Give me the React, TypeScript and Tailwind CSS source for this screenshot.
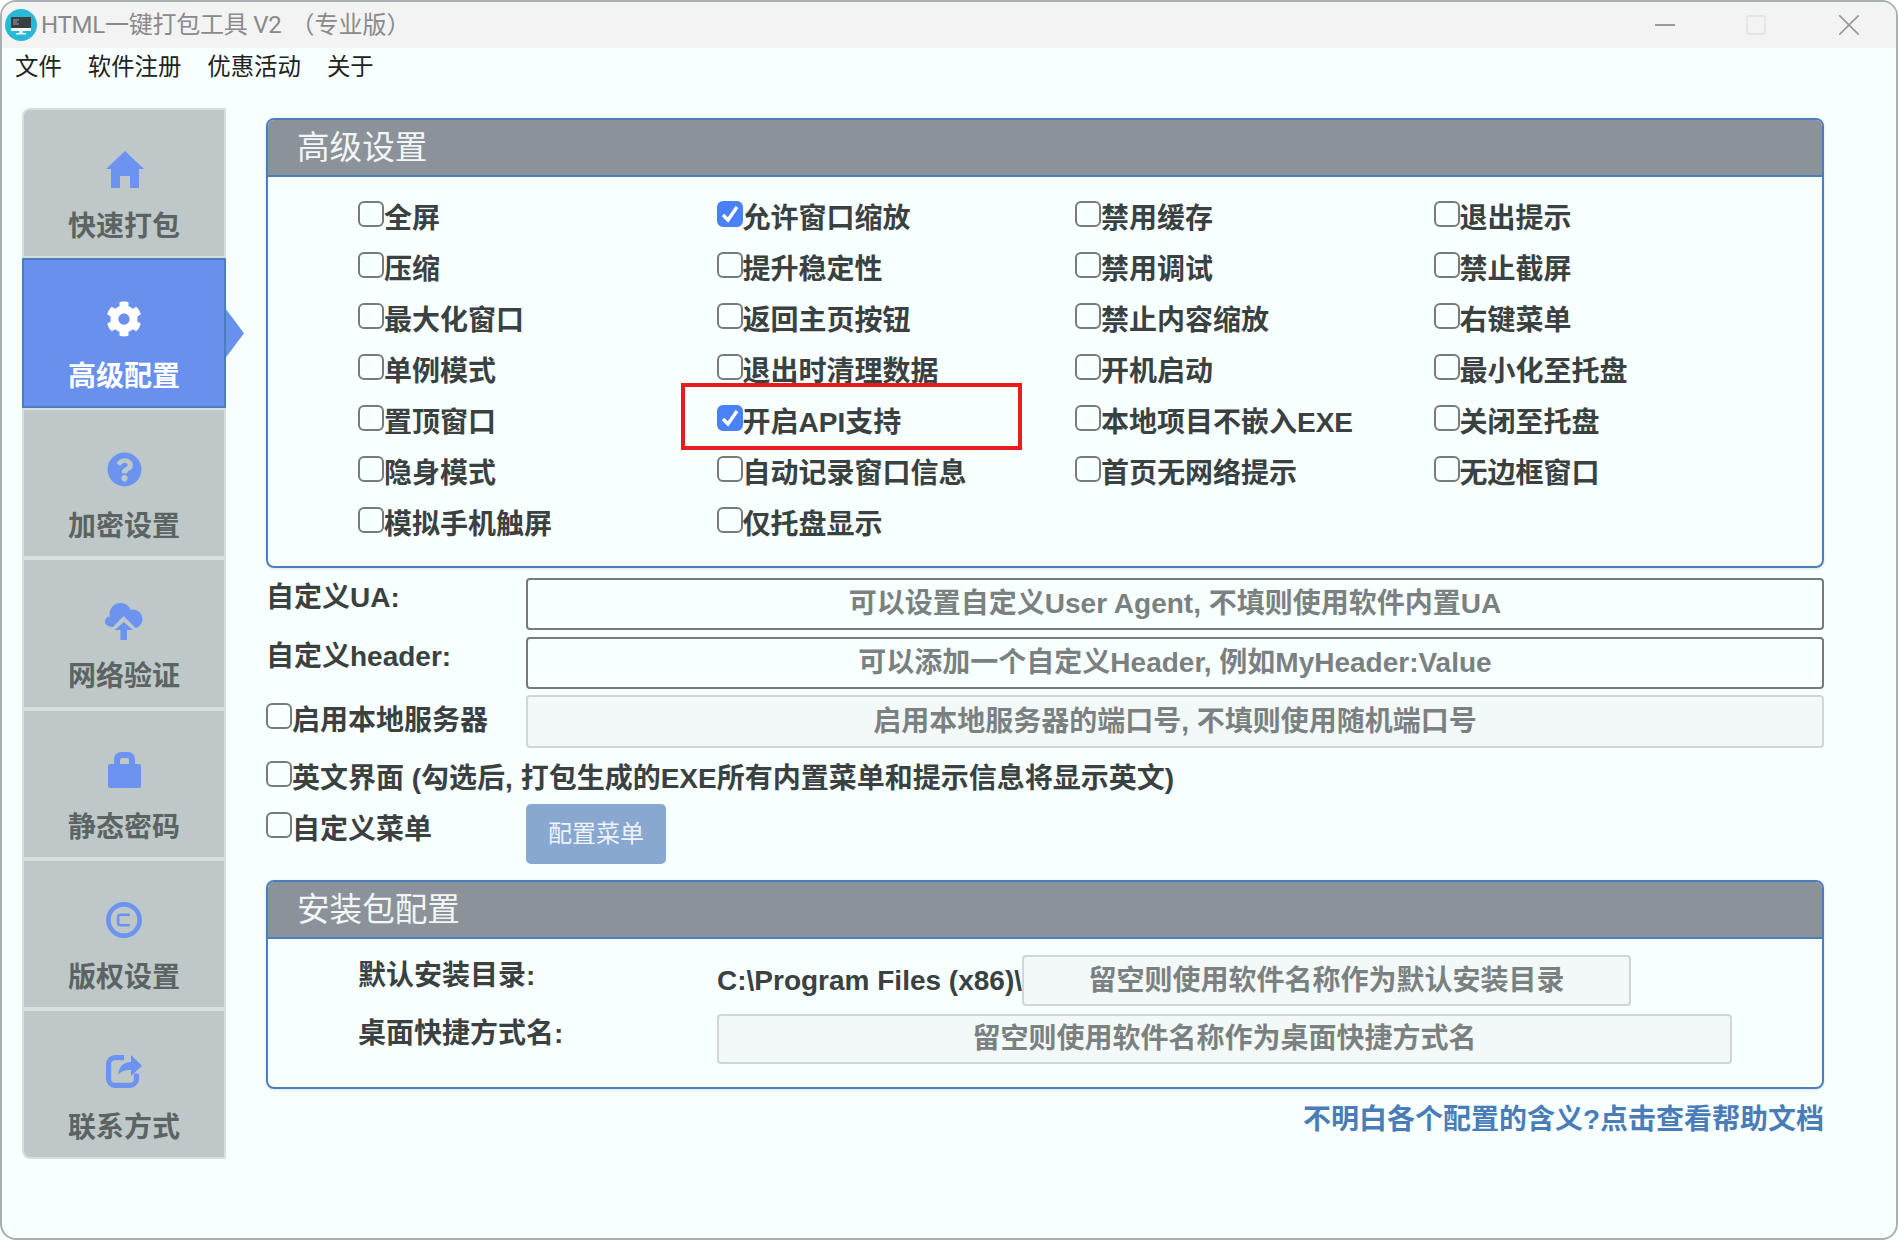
import React from 'react';
import { FaCog, FaQuestionCircle } from 'react-icons/fa';

const HomeIcon = () => (
  <svg className="ml-[2px]" width="38" height="37" viewBox="0 0 38 37" fill="currentColor">
    <path d="M19 0 L38 18 L33 18 L33 37 L24 37 L24 25 L14 25 L14 37 L5 37 L5 18 L0 18 Z" />
  </svg>
);

const CloudIcon = () => (
  <svg className="mt-[5px]" width="38" height="37" viewBox="0 0 38 37" fill="currentColor">
    <circle cx="5" cy="18.5" r="5" />
    <circle cx="15.5" cy="11" r="11" />
    <circle cx="28" cy="16" r="9.5" />
    <rect x="5" y="14" width="24" height="10" />
    <path d="M3 29 L18.7 13 L34.5 29 L34.5 37 L3 37 Z" fill="#bfc8c9" />
    <path d="M18.7 19 L28 27 L22 27 L22 37 L15.4 37 L15.4 27 L9.5 27 Z" />
  </svg>
);

const LockIcon = () => (
  <svg width="33" height="36" viewBox="0 0 33 36" fill="currentColor">
    <path
      fillRule="evenodd"
      d="M6 12 V7 A7 7 0 0 1 13 0 H20 A7 7 0 0 1 27 7 V12 H31 A2 2 0 0 1 33 14 V34 A2 2 0 0 1 31 36 H2 A2 2 0 0 1 0 34 V14 A2 2 0 0 1 2 12 Z M12 12 H21 V8 A2 2 0 0 0 19 6 H14 A2 2 0 0 0 12 8 Z"
    />
  </svg>
);

const CopyrightIcon = () => (
  <svg width="36" height="36" viewBox="0 0 36 36" fill="none" stroke="currentColor">
    <circle cx="18" cy="18" r="15.6" strokeWidth="4.6" />
    <path d="M24 12.8 H14.5 A2.4 2.4 0 0 0 12.1 15.2 V20.8 A2.4 2.4 0 0 0 14.5 23.2 H24" strokeWidth="2.6" />
  </svg>
);

const ShareIcon = () => (
  <svg className="mt-[3px]" width="36" height="33" viewBox="0 0 36 33" fill="none">
    <path
      d="M18 2.6 H9 A6.4 6.4 0 0 0 2.6 9 V24 A6.4 6.4 0 0 0 9 30.4 H24 A6.4 6.4 0 0 0 30.4 24 V18.5"
      stroke="currentColor"
      strokeWidth="5.2"
    />
    <path d="M25 0 L36 10.7 L25 21 V15 C19 15 15 16 12 20 C13 12 17 7 25 7 Z" fill="currentColor" />
  </svg>
);

const AppLogo = () => (
  <svg width="32" height="32" viewBox="0 0 32 32">
    <circle cx="16" cy="16" r="16" fill="#2ab8d8" />
    <rect x="6" y="8" width="20" height="14" fill="#f4f8f8" />
    <rect x="6" y="8" width="20" height="11" fill="#3a3f44" />
    <path d="M8 11 h6 M8 13 h4 M8 15 h6" stroke="#9aa2a8" strokeWidth="1" />
    <rect x="14" y="22" width="4" height="2" fill="#dfe8ea" />
    <rect x="11" y="24" width="10" height="1.5" fill="#f4f8f8" />
  </svg>
);

const navItems = [
  { label: '快速打包', icon: <HomeIcon /> },
  { label: '高级配置', icon: <FaCog size={36} />, active: true },
  { label: '加密设置', icon: <FaQuestionCircle size={35} /> },
  { label: '网络验证', icon: <CloudIcon /> },
  { label: '静态密码', icon: <LockIcon /> },
  { label: '版权设置', icon: <CopyrightIcon /> },
  { label: '联系方式', icon: <ShareIcon /> },
];

const options = [
  ['全屏', '允许窗口缩放', '禁用缓存', '退出提示'],
  ['压缩', '提升稳定性', '禁用调试', '禁止截屏'],
  ['最大化窗口', '返回主页按钮', '禁止内容缩放', '右键菜单'],
  ['单例模式', '退出时清理数据', '开机启动', '最小化至托盘'],
  ['置顶窗口', '开启API支持', '本地项目不嵌入EXE', '关闭至托盘'],
  ['隐身模式', '自动记录窗口信息', '首页无网络提示', '无边框窗口'],
  ['模拟手机触屏', '仅托盘显示', '', ''],
];

const checked = ['允许窗口缩放', '开启API支持'];

const Check = ({ on = false, top = 'mt-[10px]' }: { on?: boolean; top?: string }) => (
  <span className={`relative w-[26px] h-[26px] shrink-0 ${top}`}>
    <input
      type="checkbox"
      defaultChecked={on}
      className="block appearance-none w-[26px] h-[26px] m-0 border-2 border-[#767b7b] rounded-[6px] checked:bg-[#4a80f8] checked:border-[#4a80f8]"
    />
    {on && (
      <svg className="absolute left-[2px] top-[2px]" width="22" height="22" viewBox="0 0 22 22" fill="none" stroke="white" strokeWidth="3.4">
        <path d="M4 12 L9 17 L18 4" />
      </svg>
    )}
  </span>
);

const Panel = ({ title, children }: { title: string; children: React.ReactNode }) => (
  <div className="border-2 border-[#4a7fbd] rounded-lg overflow-hidden shadow-[0_1px_3px_rgba(0,0,0,0.12)]">
    <div className="h-[57px] bg-[#8c9299] border-b-2 border-[#4a7fbd] pl-[29px] text-[32.6px] leading-[55px] font-normal text-[#f2f6f6]">
      {title}
    </div>
    {children}
  </div>
);

const inputCls =
  'border-2 border-[#757b7b] rounded-[4px] bg-transparent text-center font-bold text-[28px] outline-none placeholder:text-[#7b8181] placeholder:opacity-100';
const disabledCls =
  'border-2 border-[#cfd6d6] rounded-[4px] bg-[#f3f9f8] text-center font-bold text-[28px] outline-none placeholder:text-[#7b8181] placeholder:opacity-100';

export default function App() {
  return (
    <div className="w-[1898px] h-[1240px] bg-[#f7ffff] border-2 border-[#a9b0b2] rounded-[16px] overflow-hidden [font-family:'Liberation_Sans','Noto_Sans_CJK_SC',sans-serif] text-[#3b4141]">
      {/* title bar */}
      <div className="h-[46px] bg-[#f3f3f3] flex items-center pl-[3px] text-[24px] text-[#8a8a8a]">
        <AppLogo />
        <span className="ml-[4px] tracking-[-0.25px] [font-family:'Roboto','Noto_Sans_CJK_SC',sans-serif]">HTML一键打包工具 V2</span>
        <span className="ml-[9px]">（专业版）</span>
        <div className="ml-auto flex items-center">
          <div className="w-[20px] h-[2px] bg-[#999999]" />
          <div className="w-[20px] h-[20px] ml-[71px] border-2 border-[#e5e5e5] rounded-[3px]" />
          <svg className="ml-[73px] mr-[37px]" width="20" height="20" viewBox="0 0 20 20" stroke="#999999" strokeWidth="1.6">
            <path d="M0 0 L20 20 M20 0 L0 20" />
          </svg>
        </div>
      </div>

      {/* menu */}
      <div className="h-[40px] flex items-center pl-[13px] gap-[26px] text-[23.4px] text-[#222222]">
        <span>文件</span>
        <span>软件注册</span>
        <span>优惠活动</span>
        <span>关于</span>
      </div>

      <div className="flex items-start mt-[20px] pl-[20px]">
        {/* side nav */}
        <nav className="w-[204px] h-[1051px] flex flex-col shrink-0">
          {navItems.map((item, i) => (
            <div
              key={item.label}
              className={`relative flex-1 border-2 flex flex-col items-center pt-[40px] ${
                item.active
                  ? 'bg-[#6890ec] border-[#4a7fbd] text-white'
                  : 'bg-[#bfc8c9] border-[#d8e0df] text-[#5c6363]'
              } ${i === 0 ? 'rounded-tl-lg' : ''} ${i === navItems.length - 1 ? 'rounded-bl-lg' : ''}`}
            >
              <div className={`h-[38px] flex items-center justify-center ${item.active ? 'text-white' : 'text-[#6c93f0]'}`}>
                {item.icon}
              </div>
              <div className="mt-[19px] text-[28px] leading-[40px] font-bold">{item.label}</div>
              {item.active && (
                <div className="absolute left-[202px] top-[49px] w-[18px] h-[48px] bg-[#6890ec] [clip-path:polygon(0_0,100%_50%,0_100%)]" />
              )}
            </div>
          ))}
        </nav>

        <main className="w-[1558px] ml-[40px] mt-[10px] text-[28px] font-bold">
          <Panel title="高级设置">
            <div className="relative pt-[14px] pb-[18px] pl-[90px] grid grid-cols-[358.5px_358.5px_358.5px_358.5px]">
              {options.flat().map((text, i) =>
                text ? (
                  <label key={text} className="flex items-start h-[51px] leading-[51px]">
                    <Check on={checked.includes(text)} />
                    <span className="pt-[2px] whitespace-nowrap">{text}</span>
                  </label>
                ) : (
                  <div key={i} />
                ),
              )}
              {/* red annotation box */}
              <div className="absolute left-[413px] top-[206px] w-[341px] h-[67px] border-4 border-[#e81c1c]" />
            </div>
          </Panel>

          <div className="mt-[10px] flex items-start">
            <div className="w-[260px] leading-[40px]">自定义UA:</div>
            <input className={`flex-1 h-[52px] ${inputCls}`} placeholder="可以设置自定义User Agent, 不填则使用软件内置UA" />
          </div>
          <div className="mt-[7px] flex items-start">
            <div className="w-[260px] leading-[40px]">自定义header:</div>
            <input className={`flex-1 h-[52px] ${inputCls}`} placeholder="可以添加一个自定义Header, 例如MyHeader:Value" />
          </div>
          <div className="mt-[6px] flex items-start">
            <label className="w-[260px] flex items-start leading-[48px]">
              <Check top="mt-[8px]" />
              <span className="pt-[2px]">启用本地服务器</span>
            </label>
            <input disabled className={`flex-1 h-[53px] ${disabledCls}`} placeholder="启用本地服务器的端口号, 不填则使用随机端口号" />
          </div>
          <label className="mt-[5px] flex items-start leading-[48px]">
            <Check top="mt-[8px]" />
            <span className="pt-[2px]">英文界面 (勾选后, 打包生成的EXE所有内置菜单和提示信息将显示英文)</span>
          </label>
          <div className="mt-[1px] flex items-start">
            <label className="w-[260px] flex items-start leading-[48px]">
              <Check top="mt-[8px]" />
              <span className="pt-[2px]">自定义菜单</span>
            </label>
            <button className="w-[140px] h-[60px] rounded-[5px] bg-[#88a8cf] text-[24px] font-normal text-[#eef4fa]">
              配置菜单
            </button>
          </div>

          <div className="mt-[16px]">
            <Panel title="安装包配置">
              <div className="pt-[16px] pb-[23px] pl-[90px]">
                <div className="flex items-start">
                  <div className="w-[359px] leading-[42px]">默认安装目录:</div>
                  <div className="flex items-center">
                    <span className="w-[305px] whitespace-nowrap">C:\Program Files (x86)\</span>
                    <input disabled className={`w-[609px] h-[51px] ${disabledCls}`} placeholder="留空则使用软件名称作为默认安装目录" />
                  </div>
                </div>
                <div className="mt-[8px] flex items-start">
                  <div className="w-[359px] leading-[40px]">桌面快捷方式名:</div>
                  <input disabled className={`w-[1015px] h-[50px] ${disabledCls}`} placeholder="留空则使用软件名称作为桌面快捷方式名" />
                </div>
              </div>
            </Panel>
          </div>

          <div className="h-[60px] leading-[62px] text-right text-[#4a7db8]">不明白各个配置的含义?点击查看帮助文档</div>
        </main>
      </div>
    </div>
  );
}
